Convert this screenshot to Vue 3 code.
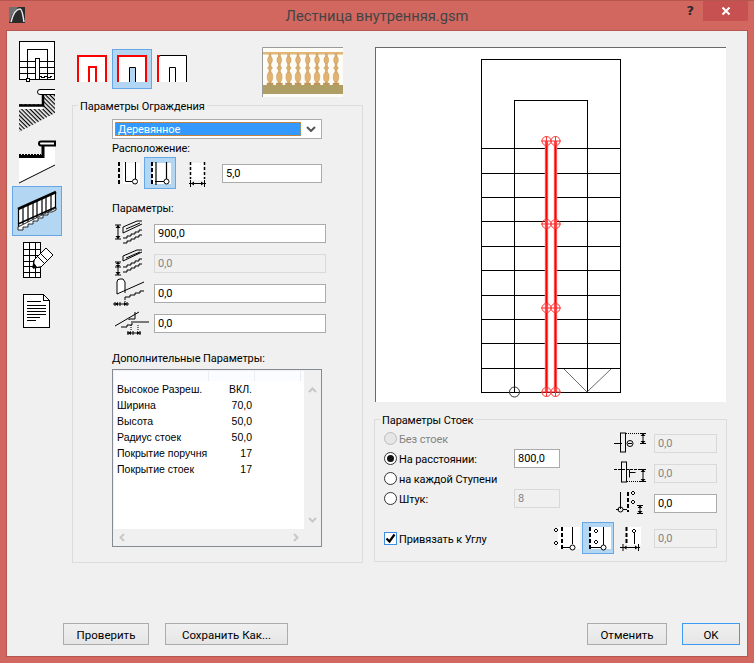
<template>
  <div class="window">
    <div class="titlebar">
      <div class="tb-left">
        <svg class="app-icon" width="16" height="16" viewBox="0 0 16 16">
          <rect width="16" height="16" fill="#2b2b2b" />
          <path d="M0 0h9L3 8 0 16z" fill="#6d7170" />
          <path d="M2 15C4 7 7 2 11 2c2 0 3 6 4 13" fill="none" stroke="#e8e8e8" stroke-width="1.5" />
        </svg>
      </div>
      <div class="title">Лестница внутренняя.gsm</div>
      <div class="tb-right">
        <span class="help">?</span>
        <span class="close">
          <svg width="10" height="10" viewBox="0 0 10 10"><path d="M1.5 1.5l7 7M8.5 1.5l-7 7" stroke="#fff" stroke-width="2" /></svg>
        </span>
      </div>
    </div>

    <div class="client">
      <div class="content">
        <!-- left tool strip -->
        <div class="toolbar">
          <div class="tool">
            <svg width="50" height="50" viewBox="0 0 50 50" class="px">
              <rect x="7.5" y="5.5" width="35" height="38" fill="#fff" stroke="#000" />
              <path d="M15.5 25V13.5h20V25M7 25.5h16M27 25.5h16M7 31.5h16M27 31.5h16M7 37.5h16M27 37.5h16" fill="none" stroke="#000" />
              <path d="M15.5 25v18M35.5 25v18M23.5 22.5v21M27.5 22.5v21M23 22.5h5" fill="none" stroke="#000" />
              <rect x="14" y="42" width="3" height="3" fill="#fff" stroke="#000" />
              <path d="M28 40l3 2 3-2 3 2 3-2" fill="none" stroke="#000" />
            </svg>
          </div>
          <div class="tool">
            <svg width="50" height="50" viewBox="0 0 50 50">
              <defs>
                <pattern id="hatch" width="3" height="3" patternUnits="userSpaceOnUse" patternTransform="rotate(45)">
                  <rect width="3" height="1.2" fill="#000" />
                </pattern>
              </defs>
              <path d="M43 9h-13v9H7v28l36-19z" fill="url(#hatch)" />
              <rect x="7" y="20" width="24" height="3" fill="#fff" />
              <path d="M7 19.500h24V9" fill="none" stroke="#000" stroke-width="2.500" />
              <path d="M43 3.500H28a2 2 0 0 0 0 5h15" fill="#fff" stroke="#000" />
            </svg>
          </div>
          <div class="tool">
            <svg width="50" height="50" viewBox="0 0 50 50">
              <path d="M43 9H31v11H7v27L43 29z" fill="#fff" />
              <path d="M7 20.500h24V9" fill="none" stroke="#000" stroke-width="3" />
              <path d="M7 18.500h22" stroke="#000" stroke-width="1" stroke-dasharray="2 1" />
              <path d="M43 5.500H29a2 2 0 0 0 0 4h14z" fill="#fff" stroke="#000" stroke-width="2" />
              <path d="M7 47l36-18" stroke="#000" fill="none" />
            </svg>
          </div>
          <div class="tool sel">
            <svg width="48" height="48" viewBox="1 1 48 48">
              <path d="M6 24L44 7v16L6 40z" fill="#fff" />
              <path d="M6 23L44 6" stroke="#000" stroke-width="2.500" fill="none" />
              <path d="M6 38l38-17" stroke="#000" stroke-width="1.500" fill="none" />
              <path d="M6.500 22v19M11 20v18M16 18v18M21 16v18M25 14v18M30 12v18M34 10v18M39 8v18M43.500 6v18" stroke="#000" stroke-width="1.200" />
              <path d="M6 44h5v-3h5v-3h5v-3h5v-3h5v-3h5v-3h4l4-2v-2L6 41z" fill="#fff" stroke="#000" stroke-width="0.800" />
            </svg>
          </div>
          <div class="tool">
            <svg width="50" height="50" viewBox="0 0 50 50" class="px">
              <rect x="11.5" y="6.5" width="17" height="35" fill="#fff" stroke="#000" />
              <path d="M11 13.5h17M11 19.5h17M11 25.5h17M11 30.5h17M11 36.5h17M17.5 6v36M23.5 6v36" stroke="#000" />
              <path d="M22 24l12-12 7 7-12 12-8 1z" fill="#fff" stroke="#000" shape-rendering="auto" />
              <path d="M22 24l-1 8 8-1M26 21l6 6M29 18l6 6" fill="none" stroke="#000" shape-rendering="auto" />
              <path d="M21 32l1-5 3 4z" fill="#000" shape-rendering="auto" />
            </svg>
          </div>
          <div class="tool">
            <svg width="50" height="50" viewBox="0 0 50 50" class="px">
              <path d="M11.5 8.5h20l6 6v27h-26z" fill="#fff" stroke="#000" />
              <path d="M31.5 8.5v6h6" fill="none" stroke="#000" />
              <path d="M15 15h14M15 19h19M15 22h19M15 25h19M15 28h19M15 31h13M15 34h9" stroke="#000" />
            </svg>
          </div>
        </div>

        <!-- middle column -->
        <div class="middle">
          <div class="top-row">
            <svg class="rail-kind" width="30" height="27" viewBox="0 0 30 27">
              <rect width="30" height="27" fill="#fff" />
              <path d="M1 27V1h28v26M12 27V12h7v15" fill="none" stroke="#f00" stroke-width="2" />
            </svg>
            <div class="rail-btn">
              <svg width="30" height="27" viewBox="0 0 30 27">
                <rect width="30" height="27" fill="#fff" />
                <path d="M1 27V1h28v26" fill="none" stroke="#f00" stroke-width="2" />
                <path d="M12.5 27V12.5h6V27" fill="#b3d7f3" stroke="#000" />
              </svg>
            </div>
            <svg class="rail-kind" width="30" height="27" viewBox="0 0 30 27">
              <rect width="30" height="27" fill="#fff" />
              <path d="M1 27V1h2" fill="none" stroke="#f00" stroke-width="2" />
              <path d="M3 .5h26.5V27M12.5 27V12.5h6V27" fill="none" stroke="#000" />
            </svg>
            <svg class="preview-thumb" width="81" height="50" viewBox="0 0 81 50">
              <rect width="81" height="50" fill="#fdfcf6" />
              <path d="M.5 50V.5H81" fill="none" stroke="#9a9a9a" stroke-width="1" />
              <rect x="1" y="5" width="80" height="2.500" fill="#e3b577" />
              <g v-for="x in balusters" :key="x" fill="#e2b271" stroke="#b98d52" stroke-width="0.4">
                <rect :x="x - 1" y="7" width="2" height="31" />
                <ellipse :cx="x" cy="13" rx="2.400" ry="3.600" />
                <ellipse :cx="x" cy="21" rx="2.400" ry="1.400" />
                <ellipse :cx="x" cy="30" rx="2.800" ry="5" />
                <rect :x="x - 3" y="36" width="6" height="2" fill="#c2955a" />
              </g>
              <rect x="1" y="38" width="80" height="9" fill="#b09f65" />
            </svg>
          </div>

          <div class="group group-rail">
            <span class="legend">Параметры Ограждения</span>
            <div class="select">
              <span class="select-value">Деревянное</span>
              <svg width="10" height="6" viewBox="0 0 10 6"><path d="M1 1l4 4 4-4" fill="none" stroke="#555" stroke-width="2" /></svg>
            </div>
            <div class="label">Расположение:</div>
            <div class="place-row">
              <svg width="32" height="32" viewBox="0 0 32 32">
                <rect x="11" y="6" width="17" height="21" fill="#fff" />
                <path d="M7 5v23" stroke="#000" stroke-width="2" stroke-dasharray="4 2" />
                <path d="M13.5 5v19.5H20M23.5 5v17" fill="none" stroke="#000" />
                <circle cx="23" cy="24.5" r="2.5" fill="#fff" stroke="#000" />
              </svg>
              <div class="ic-btn">
                <svg width="30" height="30" viewBox="1 1 30 30">
                  <rect x="8" y="6" width="19" height="21" fill="#fff" />
                  <path d="M8 5v23" stroke="#000" stroke-width="2" stroke-dasharray="4 2" />
                  <path d="M12 5v23M11 24.5h9M22.5 5v17" fill="none" stroke="#000" stroke-width="1.2" />
                  <circle cx="22.5" cy="24.5" r="2.5" fill="#fff" stroke="#000" />
                </svg>
              </div>
              <svg width="32" height="32" viewBox="0 0 32 32">
                <rect x="15" y="6" width="13" height="17" fill="#fff" />
                <path d="M14.5 5v17M28.5 5v17" stroke="#000" stroke-width="1.5" stroke-dasharray="3 2" />
                <path d="M13 26.5h17M14.5 23v7M28.5 23v7" stroke="#000" />
                <path d="M15 26.5l3-2v4zM28 26.5l-3-2v4z" fill="#000" />
              </svg>
              <input class="field place-input" value="5,0" readonly />
            </div>

            <div class="label label-params">Параметры:</div>
            <div class="param-row">
              <svg width="42" height="30" viewBox="0 0 42 30">
                <path d="M3 7h6M3 21h6M6 7v14" stroke="#000" />
                <path d="M3.5 10L6 7l2.5 3zM3.5 18L6 21l2.5-3z" fill="#000" />
                <path d="M11 15V9L25 3h5M11 15l19-9M14 11l14-6M11 20h4v-2h4v-2h4v-2h4v-2h3M11 25h4v-2h4v-2h4v-2h4v-2h3" fill="none" stroke="#000" />
              </svg>
              <input class="field param-input" value="900,0" readonly />
            </div>
            <div class="param-row">
              <svg width="42" height="30" viewBox="0 0 42 30">
                <path d="M3 14h6M3 19h6M3 27h6M6 14v13" stroke="#000" />
                <path d="M3.5 16L6 14l2.5 2zM3.5 17L6 19l2.5-2zM3.5 24L6 27l2.5-3z" fill="#000" />
                <path d="M11 13V8l14-6h5M11 13l19-9M14 10l14-6M11 19h4v-2h4v-2h4v-2h4v-2h3M11 24h4v-2h4v-2h4v-2h4v-2h3" fill="none" stroke="#000" />
              </svg>
              <input class="field param-input dis" value="0,0" disabled />
            </div>
            <div class="param-row">
              <svg width="42" height="30" viewBox="0 0 42 30">
                <path d="M5 16V4q0-3 3-3h3l2 3v11" fill="#fff" stroke="#000" />
                <path d="M5 16L32 4" fill="none" stroke="#000" />
                <path d="M13 21v-2h5v-2h5v-2h5v-2h4" fill="none" stroke="#000" />
                <path d="M13 21v3" stroke="#000" stroke-dasharray="1 1" />
                <path d="M1 26h16M3 24v4M8 24v4M15 24v4" stroke="#000" />
                <path d="M3 26l3-2v4zM15 26l-3-2v4z" fill="#000" />
              </svg>
              <input class="field param-input" value="0,0" readonly />
            </div>
            <div class="param-row">
              <svg width="42" height="30" viewBox="0 0 42 30">
                <path d="M3 18L27 4M17 12v-1h6V4M19 14h18M9 19h6v-2h5v-2" fill="none" stroke="#000" />
                <path d="M19 17v6M26 17v6" stroke="#000" stroke-dasharray="1 1" />
                <path d="M15 25h14M16 23v4M21 23v4M28 23v4" stroke="#000" />
                <path d="M16 25l3-2v4zM28 25l-3-2v4z" fill="#000" />
              </svg>
              <input class="field param-input" value="0,0" readonly />
            </div>

            <div class="label label-extra">Дополнительные Параметры:</div>
            <div class="listbox">
              <div class="list-head"><i></i><i></i><i></i></div>
              <div class="list-main">
                <div class="list-rows">
                  <div v-for="row in extraParams" :key="row[0]" class="list-row">
                    <span class="list-name">{{ row[0] }}</span>
                    <span class="list-val">{{ row[1] }}</span>
                  </div>
                </div>
                <div class="vscroll">
                  <svg width="9" height="6" viewBox="0 0 9 6"><path d="M1 5l3.5-3.5L8 5" fill="none" stroke="#c8c8c8" stroke-width="2" /></svg>
                  <svg width="9" height="6" viewBox="0 0 9 6"><path d="M1 1l3.5 3.5L8 1" fill="none" stroke="#c8c8c8" stroke-width="2" /></svg>
                </div>
              </div>
              <div class="hscroll">
                <svg width="6" height="9" viewBox="0 0 6 9"><path d="M5 1L1.5 4.5 5 8" fill="none" stroke="#c8c8c8" stroke-width="2" /></svg>
                <svg width="6" height="9" viewBox="0 0 6 9"><path d="M1 1l3.5 3.5L1 8" fill="none" stroke="#c8c8c8" stroke-width="2" /></svg>
              </div>
            </div>
          </div>
        </div>

        <!-- right column -->
        <div class="right">
          <svg class="plan" width="351" height="355" viewBox="375 48 351 355">
            <rect x="375" y="48" width="351" height="355" fill="#fff" />
            <path d="M375.5 403V48.500H726" stroke="#696969" fill="none" shape-rendering="crispEdges" />
            <g fill="none" stroke="#000" shape-rendering="crispEdges">
              <rect x="481.5" y="60.5" width="138.5" height="332.5" />
              <path d="M514.5 393V101.500H587.500V393" />
              <template v-for="y in treads" :key="y">
                <path :d="`M481 ${y}H546M556 ${y}H620`" />
              </template>
            </g>
            <path d="M564 370l23 23 24-23" fill="none" stroke="#444" stroke-width="0.8" />
            <circle cx="514.500" cy="393" r="5" fill="none" stroke="#333" />
            <g fill="none">
              <path d="M546.500 142V393M555.500 142V393" stroke="#ff9a9a" stroke-width="3.500" />
              <path d="M546.500 142V393M555.500 142V393" stroke="#f00" stroke-width="2" />
              <g v-for="y in posts" :key="y" stroke="#f33" stroke-width="1">
                <circle cx="546.500" :cy="y" r="4.500" />
                <circle cx="555.500" :cy="y" r="4.500" />
                <path :d="`M541 ${y}H561M546.500 ${y - 4.5}v9M555.500 ${y - 4.5}v9`" />
              </g>
            </g>
          </svg>

          <div class="group group-posts">
            <span class="legend">Параметры Стоек</span>
            <div class="posts-top">
              <div class="radios">
                <div class="radio-row off"><span class="radio"></span><span class="radio-text">Без стоек</span></div>
                <div class="radio-row">
                  <span class="radio on"></span><span class="radio-text">На расстоянии:</span>
                  <input class="field small" value="800,0" readonly />
                </div>
                <div class="radio-row"><span class="radio"></span><span class="radio-text">на каждой Ступени</span></div>
                <div class="radio-row">
                  <span class="radio"></span><span class="radio-text">Штук:</span>
                  <input class="field small dis" value="8" disabled />
                </div>
              </div>
              <div class="offsets">
                <div class="offset-row">
                  <svg width="36" height="30" viewBox="0 0 36 30">
                    <path d="M2 15.500h8M16 15.500h4" stroke="#000" />
                    <rect x="8.500" y="5" width="5" height="19" fill="none" stroke="#000" />
                    <circle cx="18" cy="15.500" r="3" fill="none" stroke="#000" />
                    <path d="M14 5.500h17" stroke="#000" stroke-dasharray="1 1" />
                    <path d="M28 5.500h6M28 15.500h6M31 5v11" stroke="#000" />
                    <path d="M28.500 8L31 5.500 33.500 8zM28.500 13l2.500 2.500 2.500-2.500z" fill="#000" />
                  </svg>
                  <input class="field offset dis" value="0,0" disabled />
                </div>
                <div class="offset-row">
                  <svg width="36" height="30" viewBox="0 0 36 30">
                    <path d="M2 11.500h27" stroke="#000" stroke-dasharray="3 1" />
                    <rect x="9.500" y="4" width="5" height="20" fill="none" stroke="#000" />
                    <path d="M17.500 11.500v8M17.500 14.500h6" stroke="#000" fill="none" />
                    <path d="M15 23.500h14" stroke="#000" stroke-dasharray="1 1" />
                    <path d="M28 11.500h6M28 23.500h6M31 11v13" stroke="#000" />
                    <path d="M28.500 14L31 11.500 33.500 14zM28.500 21l2.500 2.500 2.500-2.500z" fill="#000" />
                  </svg>
                  <input class="field offset dis" value="0,0" disabled />
                </div>
                <div class="offset-row">
                  <svg width="36" height="30" viewBox="0 0 36 30">
                    <path d="M8.500 4v17" stroke="#000" />
                    <path d="M16 4v20" stroke="#000" stroke-width="2" stroke-dasharray="4 2" />
                    <path d="M4 21.500h3M11 21.500h4" stroke="#000" />
                    <circle cx="8.500" cy="21.500" r="2.500" fill="none" stroke="#000" />
                    <path d="M21 3l2 2-2 2-2-2zM21 12l2 2-2 2-2-2z" fill="none" stroke="#000" />
                    <path d="M25 17.500h6M25 25.500h6M28 17v9" stroke="#000" />
                    <path d="M25.500 20l2.500-2.500 2.500 2.500zM25.500 23l2.500 2.500 2.500-2.500z" fill="#000" />
                  </svg>
                  <input class="field offset" value="0,0" readonly />
                </div>
              </div>
            </div>
            <div class="posts-bottom">
              <label class="check">
                <span class="checkbox">
                  <svg width="11" height="11" viewBox="0 0 11 11"><path d="M1.500 5.500l3 3 5-7" fill="none" stroke="#000" stroke-width="2.200" /></svg>
                </span>
                <span class="radio-text">Привязать к Углу</span>
              </label>
              <div class="corner-icons">
                <svg width="29" height="32" viewBox="0 0 29 32">
                  <rect x="5" y="5" width="22" height="22" fill="#fff" />
                  <path d="M3 6l2 2-2 2-2-2zM3 19l2 2-2 2-2-2z" fill="none" stroke="#000" />
                  <path d="M9 5v23" stroke="#000" stroke-width="2" stroke-dasharray="4 2" />
                  <path d="M9 25.500h9M19.500 5v17" stroke="#000" fill="none" />
                  <circle cx="19.500" cy="25.500" r="2.500" fill="#fff" stroke="#000" />
                </svg>
                <div class="ic-btn">
                  <svg width="30" height="30" viewBox="0 0 30 30">
                    <rect x="7" y="4" width="21" height="22" fill="#fff" />
                    <path d="M7 4v23" stroke="#000" stroke-width="2" stroke-dasharray="4 2" />
                    <path d="M13 6l2 2-2 2-2-2zM13 17l2 2-2 2-2-2z" fill="none" stroke="#000" />
                    <path d="M7 24.500h11M20.500 4v18" stroke="#000" fill="none" />
                    <circle cx="20.500" cy="24.500" r="2.500" fill="#fff" stroke="#000" />
                  </svg>
                </div>
                <svg class="corner-last" width="26" height="32" viewBox="0 0 26 32">
                  <rect x="9" y="5" width="14" height="18" fill="#fff" />
                  <path d="M8.500 5v17" stroke="#000" stroke-width="2" stroke-dasharray="4 2" />
                  <path d="M16 7l2 2-2 2-2-2z" fill="none" stroke="#000" />
                  <path d="M16.500 11v11M2 25.500h20M5 22v7M20.500 22v7" stroke="#000" />
                  <path d="M5.500 25.500l3-2v4zM20 25.500l-3-2v4z" fill="#000" />
                </svg>
              </div>
              <input class="field offset dis" value="0,0" disabled />
            </div>
          </div>
        </div>
      </div>

      <div class="footer">
        <button class="btn check-btn">Проверить</button>
        <button class="btn save-btn">Сохранить Как...</button>
        <button class="btn cancel-btn">Отменить</button>
        <button class="btn ok-btn">OK</button>
      </div>
    </div>
  </div>
</template>

<script setup>
const balusters = [8, 17.3, 26.7, 36, 45.7, 55, 64.3, 74]

const treads = [149.5, 174.5, 198.5, 222.5, 247.5, 271.5, 296.5, 320.5, 344.5, 369.5]
const posts = [142, 225, 309, 393]

const extraParams = [
  ['Высокое Разреш.', 'ВКЛ.'],
  ['Ширина', '70,0'],
  ['Высота', '50,0'],
  ['Радиус стоек', '50,0'],
  ['Покрытие поручня', '17'],
  ['Покрытие стоек', '17']
]
</script>

<style>
html, body {
  margin: 0;
  background: #d1675f;
}
</style>

<style scoped>
.window {
  width: 754px;
  height: 663px;
  box-sizing: border-box;
  background: #d1675f;
  border-top: 1px solid #b5564f;
  font-family: Roboto, "Open Sans", sans-serif;
  font-size: 11px;
  letter-spacing: -0.1px;
  color: #000;
  overflow: hidden;
}

.titlebar {
  height: 29px;
  display: grid;
  grid-template-columns: 1fr auto 1fr;
  align-items: start;
}

.tb-left {
  padding: 6px 0 0 9px;
}

.app-icon {
  display: block;
}

.title {
  font-size: 14.7px;
  letter-spacing: 0;
  color: #444;
  line-height: 30px;
}

.tb-right {
  display: flex;
  justify-content: flex-end;
  padding-right: 6px;
}

.help {
  font-family: "DejaVu Sans", sans-serif;
  font-weight: 700;
  font-size: 13px;
  color: #2b2b2b;
  margin: 2px 9px 0 0;
}

.close {
  width: 45px;
  height: 20px;
  background: #c75050;
  display: flex;
  align-items: center;
  justify-content: center;
}

.client {
  width: 742px;
  height: 627px;
  margin-left: 6px;
  box-sizing: border-box;
  border: 1px solid #b5564f;
  background: #f0f0f0;
  display: flex;
  flex-direction: column;
}

.content {
  display: flex;
  padding: 5px 0 0 5px;
  height: 585px;
  box-sizing: border-box;
}

.toolbar {
  width: 50px;
  display: flex;
  flex-direction: column;
  margin-right: 10px;
}

.tool {
  height: 50px;
  box-sizing: border-box;
}

.tool svg {
  display: block;
}

.tool.sel {
  background: #b3d7f3;
  border: 1px solid #66a7e8;
}

.px {
  shape-rendering: crispEdges;
}

.middle {
  width: 291px;
  margin-right: 11px;
  padding-top: 11px;
}

.top-row {
  height: 58px;
  display: flex;
  align-items: flex-start;
}

.rail-kind {
  margin-top: 8px;
  margin-left: 5px;
}

.rail-btn {
  width: 40px;
  height: 40px;
  box-sizing: border-box;
  margin: 2px 0 0 5px;
  background: #b3d7f3;
  border: 1px solid #66a7e8;
  display: flex;
  justify-content: center;
  align-items: flex-end;
  padding-bottom: 6px;
}

.preview-thumb {
  margin-left: 75px;
}

.group {
  position: relative;
  box-sizing: border-box;
  border: 1px solid #dcdcdc;
}

.legend {
  position: absolute;
  top: -8px;
  left: 5px;
  padding: 0 2px;
  background: #f0f0f0;
  line-height: 17px;
  white-space: nowrap;
}

.group-rail {
  height: 458px;
  padding: 13px 0 0 39px;
}

.select {
  width: 210px;
  height: 20px;
  box-sizing: border-box;
  border: 1px solid #acacac;
  background: #fff;
  padding: 2px;
  display: flex;
  align-items: center;
}

.select-value {
  flex: 1;
  height: 14px;
  margin-right: 5px;
  background: #3399ff;
  color: #fff;
  line-height: 15px;
  padding-left: 3px;
  outline: 1px dotted #c88b4a;
  outline-offset: -1px;
}

.select svg {
  margin-right: 3px;
}

.label {
  height: 16px;
  line-height: 18px;
  margin-top: 1px;
  white-space: nowrap;
}

.place-row {
  display: flex;
  align-items: center;
  height: 32px;
  margin-top: 1px;
}

.place-row > svg {
  flex: none;
}

.ic-btn {
  width: 32px;
  height: 32px;
  box-sizing: border-box;
  background: #b3d7f3;
  border: 1px solid #66a7e8;
  flex: none;
}

.ic-btn svg {
  display: block;
}

.field {
  box-sizing: border-box;
  height: 19px;
  border: 1px solid #ababab;
  background: #fff;
  padding: 1px 3px 0;
  font-family: Roboto, "Open Sans", sans-serif;
  font-size: 11px;
  color: #000;
  outline: none;
}

.field.dis {
  background: #f0f0f0;
  border-color: #d9d9d9;
  color: #838383;
}

.place-input {
  width: 100px;
  margin-left: 14px;
}

.label-params {
  margin-top: 11px;
}

.param-row {
  display: flex;
  align-items: center;
  height: 30px;
}

.label-params + .param-row {
  margin-top: 2px;
}

.param-input {
  width: 172px;
}

.label-extra {
  margin-top: 12px;
}

.listbox {
  width: 210px;
  height: 178px;
  margin-top: 3px;
  box-sizing: border-box;
  border: 1px solid #858b95;
  padding: 1px;
  display: flex;
  flex-direction: column;
}

.list-head {
  height: 10px;
  display: flex;
  width: 190px;
  background: #fbfcff;
}

.list-head i {
  width: 45px;
  border-right: 1px solid #e8eef6;
}

.list-head i:first-child {
  width: 94px;
}

.list-main {
  display: flex;
  height: 148px;
}

.list-rows {
  width: 190px;
  background: #fff;
  padding: 0 0 0 3px;
  box-sizing: border-box;
}

.list-row {
  height: 16px;
  font-family: "Liberation Sans", Arial, sans-serif;
  font-size: 10.5px;
  letter-spacing: 0;
  line-height: 16px;
  display: flex;
  white-space: nowrap;
}

.list-name {
  width: 95px;
}

.list-val {
  width: 40px;
  text-align: right;
}

.vscroll {
  width: 16px;
  display: flex;
  flex-direction: column;
  justify-content: space-between;
  align-items: center;
  padding: 6px 0;
  box-sizing: border-box;
}

.hscroll {
  width: 190px;
  height: 16px;
  display: flex;
  justify-content: space-between;
  align-items: center;
  padding: 0 5px;
  box-sizing: border-box;
}

.right {
  width: 353px;
  padding-top: 11px;
}

.plan {
  display: block;
  margin-left: 1px;
}

.group-posts {
  margin-top: 17px;
  height: 143px;
  padding: 8px 9px 0 9px;
}

.posts-top {
  display: flex;
  justify-content: space-between;
  height: 90px;
}

.radios {
  width: 176px;
}

.radio-row {
  height: 20px;
  display: flex;
  align-items: center;
  white-space: nowrap;
}

.radio-row.off {
  color: #838383;
}

.radio-text {
  width: 115px;
  padding-top: 2px;
}

.radio {
  width: 13px;
  height: 13px;
  box-sizing: border-box;
  border: 1px solid #333;
  border-radius: 50%;
  background: #fff;
  margin-right: 2px;
  flex: none;
  display: flex;
  align-items: center;
  justify-content: center;
}

.off .radio {
  background: #e6e6e6;
  border-color: #bcbcbc;
}

.radio.on::after {
  content: "";
  width: 7px;
  height: 7px;
  border-radius: 50%;
  background: #111;
}

.field.small {
  width: 46px;
}

.offsets {
  width: 105px;
}

.offset-row {
  display: flex;
  align-items: center;
  height: 30px;
}

.offset-row svg {
  margin-right: 6px;
  flex: none;
}

.field.offset {
  width: 63px;
}

.posts-bottom {
  display: flex;
  align-items: center;
  height: 32px;
  margin-top: 4px;
}

.check {
  display: flex;
  align-items: center;
  width: 169px;
  white-space: nowrap;
}

.checkbox {
  width: 13px;
  height: 13px;
  box-sizing: border-box;
  border: 1px solid #3a8ee6;
  background: #fff;
  margin-right: 2px;
  display: flex;
  align-items: center;
  justify-content: center;
}

.corner-icons {
  display: flex;
  align-items: center;
  width: 100px;
  flex: none;
}

.corner-last {
  margin-left: 4px;
}

.corner-icons + .field {
  margin-left: 1px;
}

.footer {
  display: flex;
  padding: 7px 7px 0 56px;
}

.btn {
  height: 22px;
  box-sizing: border-box;
  border: 1px solid #acacac;
  background: linear-gradient(#f0f0f0, #e5e5e5);
  font-family: Roboto, "Open Sans", sans-serif;
  font-size: 11.5px;
  color: #000;
  padding: 2px 0 0;
}

.check-btn {
  width: 86px;
}

.save-btn {
  width: 123px;
  margin-left: 16px;
}

.cancel-btn {
  width: 80px;
  margin-left: auto;
}

.ok-btn {
  width: 58px;
  margin-left: 15px;
  border-color: #3c9af0;
}
</style>
